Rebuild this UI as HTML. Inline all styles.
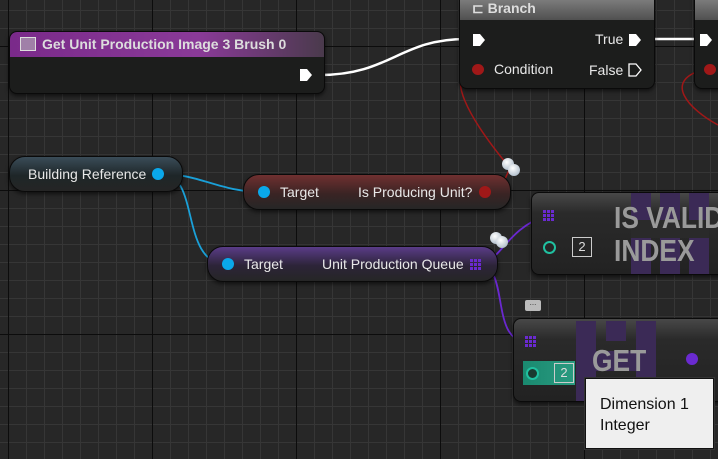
<!DOCTYPE html>
<html><head><meta charset="utf-8"><style>
body{margin:0;width:718px;height:459px;overflow:hidden;font-family:"Liberation Sans",sans-serif;
background-color:#272727;
background-image:
linear-gradient(90deg,#0c0c0c 1px,transparent 1px),
linear-gradient(#0c0c0c 1px,transparent 1px),
linear-gradient(90deg,#363636 1px,transparent 1px),
linear-gradient(#363636 1px,transparent 1px);
background-size:144px 144px,144px 144px,18px 18px,18px 18px;
background-position:8px 46px,8px 46px,8px 10px,8px 10px;position:relative}
.n{position:absolute;background:#1c1d1c;border:1px solid #0a0a0a;border-radius:8px;box-shadow:0 2px 4px rgba(0,0,0,.6);overflow:hidden}
.t{position:absolute;color:#e8e8e8;font-size:14px;white-space:nowrap}
.hdr{position:absolute;left:0;right:0;top:0;border-radius:7px 7px 0 0}
.pill{position:absolute;border:1px solid #0a0a0a;border-radius:16px;box-shadow:0 2px 4px rgba(0,0,0,.6)}
.big{position:absolute;color:#9a9a9a;font-weight:bold;font-size:31px;line-height:33px;white-space:nowrap;transform:scaleX(.85);transform-origin:0 0}
.grid{position:absolute;width:11px;height:11px;background:repeating-linear-gradient(90deg,#6a2ad0 0 3px,transparent 3px 4px);-webkit-mask:repeating-linear-gradient(#000 0 3px,transparent 3px 4px);mask:repeating-linear-gradient(#000 0 3px,transparent 3px 4px)}
</style></head><body>
<svg width="718" height="459" style="position:absolute;left:0;top:0">
<path d="M320 75 C390 75 400 39 466 39" stroke="#fff" stroke-width="2.5" fill="none"/>
<path d="M640 39 L700 39" stroke="#fff" stroke-width="2.5" fill="none"/>
<path d="M478 69 C440 69 470 120 510 168 L500 190 L488 192" stroke="#a01818" stroke-width="1.5" fill="none"/>
<path d="M706 69 C660 80 690 110 718 125" stroke="#a01818" stroke-width="1.5" fill="none"/>
<path d="M162 174 C200 174 220 192 262 192" stroke="#1aa0d8" stroke-width="1.8" fill="none"/>
<path d="M162 174 C200 174 180 264 226 264" stroke="#1aa0d8" stroke-width="1.8" fill="none"/>
<path d="M478 264 C500 264 505 230 545 216" stroke="#6a28d0" stroke-width="1.8" fill="none"/>
<path d="M478 264 C510 264 490 340 525 341" stroke="#6a28d0" stroke-width="1.8" fill="none"/>
<path d="M695 359 L718 357" stroke="#6a28d0" stroke-width="1.8" fill="none"/>
</svg>

<div class="n" style="left:9px;top:31px;width:314px;height:61px">
<div class="hdr" style="height:25px;background:linear-gradient(90deg,#7a2a8a,#8a3a98 60%,#4a3a4c);"></div>
<div style="position:absolute;left:10px;top:5px;width:14px;height:12px;border:1px solid #ddd;background:#a080a8"></div>
<div class="t" style="left:32px;top:4px;font-weight:bold;color:#ddd">Get Unit Production Image 3 Brush 0</div>
<svg style="position:absolute;left:289px;top:36px" width="14" height="14"><path d="M1 1 H8 L13 7 L8 13 H1Z" fill="#fff"/></svg>
</div>

<div class="n" style="left:459px;top:-8px;width:194px;height:95px">
<div class="hdr" style="height:27px;background:linear-gradient(#8a8a8a,#505050);"></div>
<div class="t" style="left:12px;top:7px;font-weight:bold;color:#ddd">⊏ Branch</div>
<svg style="position:absolute;left:12px;top:40px" width="14" height="14"><path d="M1 1 H8 L13 7 L8 13 H1Z" fill="#fff"/></svg>
<div style="position:absolute;left:12px;top:71px;width:12px;height:11px;border-radius:50%;background:#a01818"></div>
<div class="t" style="left:34px;top:68px">Condition</div>
<div class="t" style="left:135px;top:38px">True</div>
<svg style="position:absolute;left:168px;top:40px" width="14" height="14"><path d="M1 1 H8 L13 7 L8 13 H1Z" fill="#fff"/></svg>
<div class="t" style="left:129px;top:69px">False</div>
<svg style="position:absolute;left:168px;top:70px" width="14" height="14"><path d="M1 1 H8 L13 7 L8 13 H1Z" fill="none" stroke="#fff" stroke-width="1.3"/></svg>
</div>
<div class="n" style="left:694px;top:-8px;width:40px;height:95px">
<div class="hdr" style="height:27px;background:linear-gradient(#8a8a8a,#505050);"></div>
<svg style="position:absolute;left:4px;top:40px" width="14" height="14"><path d="M1 1 H8 L13 7 L8 13 H1Z" fill="#fff"/></svg>
<div style="position:absolute;left:9px;top:71px;width:12px;height:11px;border-radius:50%;background:#a01818"></div>
</div>

<div class="pill" style="left:9px;top:156px;width:172px;height:34px;background:linear-gradient(#3a4c58,#1e2628 55%,#252525)"></div>
<div class="t" style="left:28px;top:166px">Building Reference</div>
<div style="position:absolute;left:152px;top:168px;width:12px;height:12px;border-radius:50%;background:#0aa8ea"></div>

<div class="pill" style="left:243px;top:174px;width:266px;height:34px;background:linear-gradient(#703030,#3a2424 55%,#262626)"></div>
<div style="position:absolute;left:258px;top:186px;width:12px;height:12px;border-radius:50%;background:#0aa8ea"></div>
<div class="t" style="left:280px;top:184px">Target</div>
<div class="t" style="left:358px;top:184px">Is Producing Unit?</div>
<div style="position:absolute;left:479px;top:186px;width:12px;height:12px;border-radius:50%;background:#a01818"></div>

<div class="pill" style="left:207px;top:246px;width:289px;height:34px;background:linear-gradient(#5a3c88,#2c2438 55%,#262626)"></div>
<div style="position:absolute;left:222px;top:258px;width:12px;height:12px;border-radius:50%;background:#0aa8ea"></div>
<div class="t" style="left:244px;top:256px">Target</div>
<div class="t" style="left:322px;top:256px">Unit Production Queue</div>
<div class="grid" style="left:470px;top:259px"></div>

<div style="position:absolute;left:502px;top:158px;width:12px;height:12px;border-radius:50%;background:radial-gradient(circle at 40% 35%,#fff,#9ab)"></div>
<div style="position:absolute;left:508px;top:164px;width:12px;height:12px;border-radius:50%;background:radial-gradient(circle at 40% 35%,#fff,#9ab)"></div>
<div style="position:absolute;left:490px;top:232px;width:12px;height:12px;border-radius:50%;background:radial-gradient(circle at 40% 35%,#fff,#9ab)"></div>
<div style="position:absolute;left:496px;top:236px;width:12px;height:12px;border-radius:50%;background:radial-gradient(circle at 40% 35%,#fff,#9ab)"></div>

<div class="n" style="left:531px;top:192px;width:200px;height:81px;background:linear-gradient(#484848,#2a2a2a 25%,#222 100%)">
<div style="position:absolute;left:99px;top:0;width:20px;height:81px;background:#3b2a56"></div>
<div style="position:absolute;left:128px;top:0;width:20px;height:81px;background:#3b2a56"></div>
<div style="position:absolute;left:157px;top:0;width:20px;height:81px;background:#3b2a56"></div>
<div style="position:absolute;left:99px;top:27px;width:78px;height:18px;background:#2a2a2a"></div>
<div class="big" style="left:82px;top:8px">IS VALID<br>INDEX</div>
<div class="grid" style="left:11px;top:17px"></div>
<div style="position:absolute;left:11px;top:48px;width:9px;height:9px;border:2px solid #20c0a0;border-radius:50%"></div>
<div style="position:absolute;left:40px;top:44px;width:18px;height:18px;border:1px solid #ccc;color:#ddd;font-size:13px;text-align:center;line-height:18px">2</div>
</div>

<div class="n" style="left:513px;top:318px;width:210px;height:82px;background:linear-gradient(#484848,#2a2a2a 25%,#222 100%)">
<div style="position:absolute;left:62px;top:2px;width:20px;height:80px;background:#3b2a56"></div>
<div style="position:absolute;left:92px;top:2px;width:20px;height:20px;background:#3b2a56"></div>
<div style="position:absolute;left:122px;top:2px;width:20px;height:80px;background:#3b2a56"></div>
<div style="position:absolute;left:62px;top:32px;width:80px;height:20px;background:#3b2a56"></div>
<div class="big" style="left:78px;top:25px">GET</div>
<div class="grid" style="left:11px;top:17px"></div>
<div style="position:absolute;left:9px;top:42px;width:52px;height:24px;background:linear-gradient(90deg,#1a8a70,#2a9a80)"></div>
<div style="position:absolute;left:12px;top:48px;width:9px;height:9px;border:2px solid #20c0a0;border-radius:50%;background:#1a3a30"></div>
<div style="position:absolute;left:40px;top:44px;width:18px;height:18px;border:1px solid #ccc;color:#ddd;font-size:13px;text-align:center;line-height:18px">2</div>
<div style="position:absolute;left:172px;top:34px;width:12px;height:12px;border-radius:50%;background:#6a2ad0"></div>
</div>
<div style="position:absolute;left:525px;top:300px;width:16px;height:11px;background:#bbb;border-radius:2px;color:#333;font-size:8px;line-height:6px;text-align:center">...</div>

<div style="position:absolute;left:585px;top:378px;width:127px;height:69px;background:#efefef;border:1px solid #111;box-shadow:0 0 0 1px #333"></div>
<div style="position:absolute;left:600px;top:394px;color:#111;font-size:16px;line-height:21px">Dimension 1<br>Integer</div>
</body></html>
